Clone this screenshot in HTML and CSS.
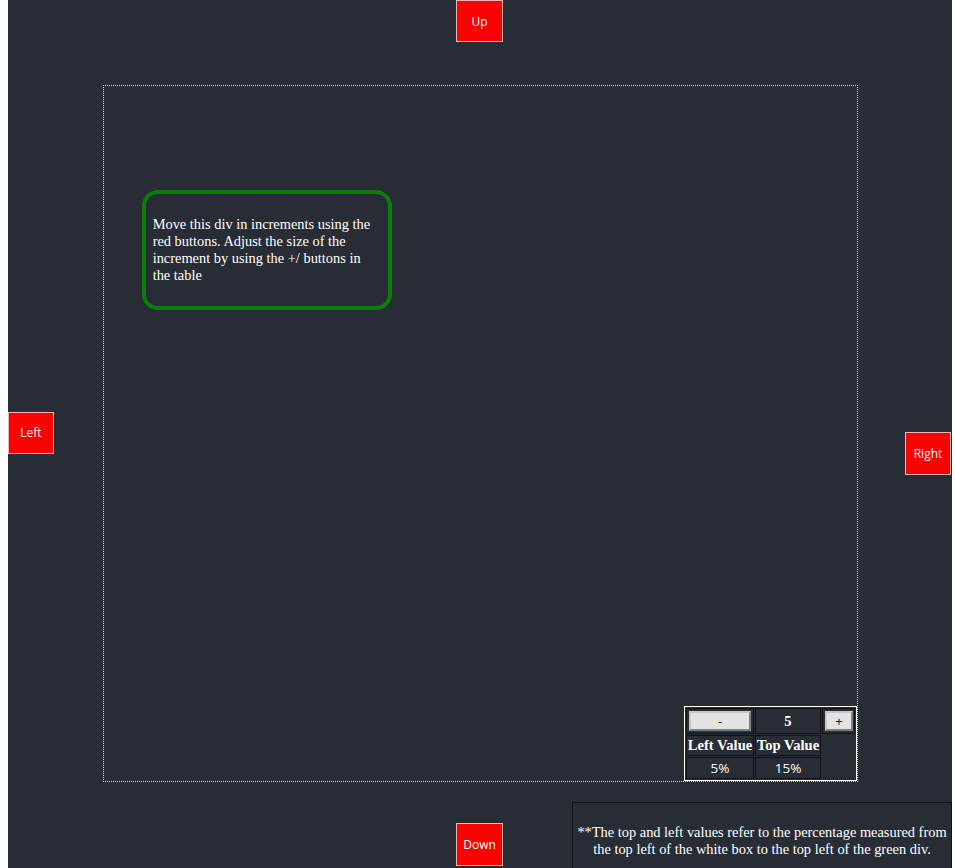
FILE: index.html
```html
<!DOCTYPE html>
<html>
<head>
<meta charset="utf-8">
<link rel="stylesheet" href="styles.css">
</head>
<body>
<div class="stage">
  <button class="move move-up">Up</button>
  <button class="move move-left">Left</button>
  <div class="arena-cell">
    <div class="arena">
      <div class="mover">
        <p>Move this div in increments using the red buttons. Adjust the size of the increment by using the +/ buttons in the table</p>
      </div>
      <table class="controls">
        <colgroup>
          <col class="c1">
          <col class="c2">
          <col class="c3">
        </colgroup>
        <tr class="r1">
          <td class="btn-cell"><button class="step step-minus">-</button></td>
          <td class="num">5</td>
          <td class="btn-cell"><button class="step step-plus">+</button></td>
        </tr>
        <tr class="r2">
          <th>Left Value</th>
          <th>Top Value</th>
          <td class="blank"></td>
        </tr>
        <tr class="r3">
          <td class="val">5%</td>
          <td class="val">15%</td>
          <td class="blank"></td>
        </tr>
      </table>
    </div>
  </div>
  <button class="move move-right">Right</button>
  <button class="move move-down">Down</button>
  <div class="note">
    <p>**The top and left values refer to the percentage measured from the top left of the white box to the top left of the green div.</p>
  </div>
</div>
</body>
</html>
```
FILE: styles.css
```css
html, body {
  margin: 0;
  padding: 0;
  background: #ffffff;
}
body {
  padding-left: 8px;
  height: 868px;
  overflow: hidden;
}
.stage {
  position: relative;
  width: 944px;
  height: 868px;
  background: #282c34;
  display: grid;
  grid-template-columns: 46px 1fr 47px;
  grid-template-rows: 42px 1fr 45px;
}
.move {
  width: 47px;
  height: 42px;
  background: #ff0000;
  color: #ffffff;
  border: 1px solid #f0b4b4;
  font-family: "Open Sans", "Noto Sans", sans-serif;
  font-size: 12px;
  padding: 0;
  margin: 0;
}
.move-up {
  grid-column: 2;
  grid-row: 1;
  justify-self: center;
  align-self: start;
}
.move-left {
  grid-column: 1;
  grid-row: 2;
  align-self: center;
  width: 46px;
}
.move-right {
  grid-column: 3;
  grid-row: 2;
  align-self: center;
  margin-top: 42px;
  width: 46px;
  height: 43px;
}
.move-down {
  grid-column: 2;
  grid-row: 3;
  justify-self: center;
  align-self: start;
  height: 43px;
}
.arena-cell {
  grid-column: 2;
  grid-row: 2;
  padding: 43px 47px 41px 49px;
  display: flex;
}
.arena {
  position: relative;
  flex: 1;
  border: 1px dotted #d4d4d4;
}
.mover {
  position: absolute;
  left: 5%;
  top: 15%;
  box-sizing: border-box;
  width: 250px;
  height: 120px;
  border: 4px solid #0b7d0b;
  border-radius: 16px;
  padding: 0 7px;
  display: flex;
  align-items: center;
}
.mover p {
  margin: 0;
  color: #ffffff;
  font-family: "Liberation Serif", "Times New Roman", serif;
  font-size: 14.4px;
  line-height: 17px;
}
.controls {
  position: absolute;
  right: 0;
  bottom: 0;
  table-layout: fixed;
  width: 173px;
  border: 1px solid #ffffff;
  border-spacing: 1px;
  color: #ffffff;
  font-family: "Liberation Serif", "Times New Roman", serif;
  font-size: 14.6px;
}
.c1 { width: 68px; }
.c2 { width: 66px; }
.c3 { width: 33px; }
.controls td, .controls th {
  border: 1px solid #111317;
  padding: 0;
  text-align: center;
}
.controls td.blank {
  border: none;
}
.r1 { height: 26px; }
.r2 { height: 21px; }
.r3 { height: 22px; }
.controls th {
  font-weight: bold;
  white-space: nowrap;
}
.controls td.num {
  font-weight: bold;
}
.controls td.val {
  font-family: "Open Sans", "Noto Sans", sans-serif;
  font-size: 13.5px;
}
.btn-cell {
  padding: 1px 2px;
}
.controls td.btn-cell {
  padding: 1px 2px;
}
.step {
  display: block;
  box-sizing: border-box;
  height: 20px;
  margin: 0 auto;
  background: #e3e3e3;
  border: 2px solid #7f7f7f;
  border-top-color: #c8c8c8;
  border-left-color: #c8c8c8;
  color: #111;
  font-family: "Open Sans", "Noto Sans", sans-serif;
  font-size: 13px;
  padding: 0;
  line-height: 14px;
}
.step-minus {
  width: 62px;
}
.step-plus {
  width: 28px;
}
.note {
  position: absolute;
  right: 0;
  top: 802px;
  box-sizing: border-box;
  width: 380px;
  border: 1px solid #111317;
  padding: 21px 2px 16px;
}
.note p {
  margin: 0;
  color: #ffffff;
  text-align: center;
  font-family: "Liberation Serif", "Times New Roman", serif;
  font-size: 14.4px;
  line-height: 17px;
}
```
